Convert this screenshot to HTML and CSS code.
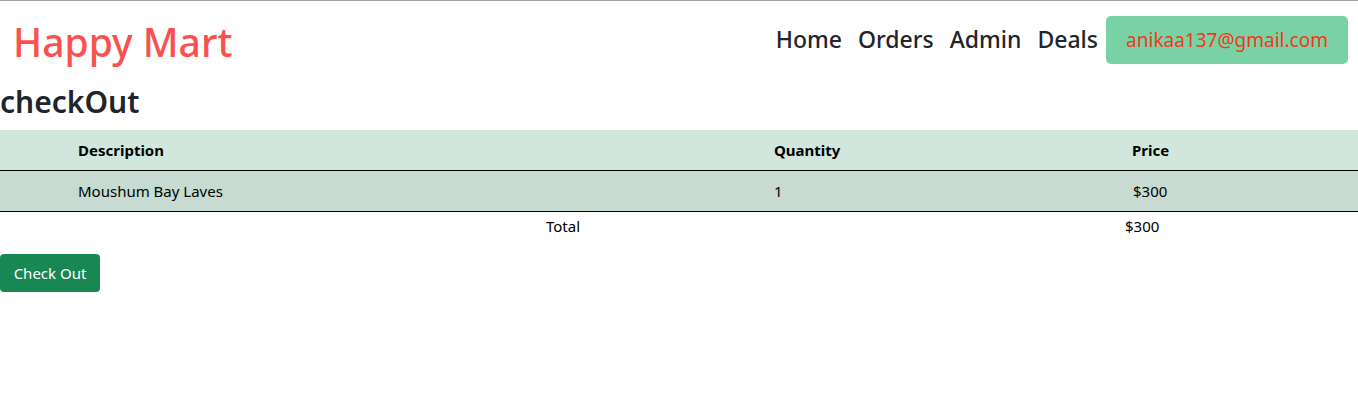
FILE: index.html
```html
<!DOCTYPE html>
<html>
<head>
<meta charset="utf-8">
<link rel="stylesheet" href="styles.css">
</head>
<body>
<header class="topbar">
  <div class="brand">Happy Mart</div>
  <nav class="nav">
    <a class="nav-link">Home</a>
    <a class="nav-link">Orders</a>
    <a class="nav-link">Admin</a>
    <a class="nav-link">Deals</a>
    <span class="user-btn">anikaa137@gmail.com</span>
  </nav>
</header>
<h2 class="title">checkOut</h2>
<div class="table">
  <div class="row head">
    <div></div>
    <div>Description</div>
    <div>Quantity</div>
    <div>Price</div>
  </div>
  <div class="row body">
    <div></div>
    <div>Moushum Bay Laves</div>
    <div>1</div>
    <div>$300</div>
  </div>
</div>
<div class="total">
  <span></span>
  <span>Total</span>
  <span>$300</span>
</div>
<button class="checkout">Check Out</button>
</body>
</html>
```
FILE: styles.css
```css
html, body {
  margin: 0;
  padding: 0;
}
body {
  font-family: "Noto Sans", "Open Sans", sans-serif;
  color: #212529;
  background: #fff;
  border-top: 1px solid #a0a0a0;
  padding-top: 1px;
}
.topbar {
  display: flex;
  align-items: center;
  justify-content: space-between;
  height: 74px;
  padding: 0 10px 0 13px;
}
.brand {
  font-size: 39px;
  font-weight: 500;
  color: #fa5150;
  line-height: 1;
  margin-top: 5px;
}
.nav {
  display: flex;
  align-items: center;
}
.nav-link {
  font-size: 23px;
  color: #212529;
  margin-right: 16px;
  font-weight: 500;
}
.nav-link:nth-child(4) {
  margin-right: 8px;
}
.user-btn {
  display: flex;
  align-items: center;
  justify-content: center;
  width: 242px;
  height: 48px;
  box-sizing: border-box;
  background: #79d2a6;
  color: #f03a17;
  border-radius: 5px;
  font-size: 19px;
  margin-top: 1px;
}
.title {
  margin: 8px 0 10px;
  font-size: 30px;
  font-weight: 600;
  line-height: 36px;
  height: 36px;
}
.table {
  display: flex;
  flex-direction: column;
  font-size: 15px;
  color: #000;
}
.row {
  display: grid;
  grid-template-columns: 78px 696px 358px 1fr;
  align-items: center;
  height: 40px;
  border-bottom: 1px solid #000;
}
.row.head {
  background: #d1e7dd;
  font-weight: 700;
}
.row.body {
  background: #c7dbd2;
}
.row.body > div:nth-child(4) {
  padding-left: 1px;
}
.total {
  display: grid;
  grid-template-columns: 546px 579px 1fr;
  height: 27px;
  padding-bottom: 1px;
  align-items: center;
  font-size: 15px;
  color: #000;
}
.checkout {
  display: block;
  margin-top: 14px;
  width: 100px;
  height: 38px;
  background: #198754;
  color: #fff;
  border: none;
  border-radius: 4px;
  font-family: inherit;
  font-size: 15px;
  padding: 0;
}
```
